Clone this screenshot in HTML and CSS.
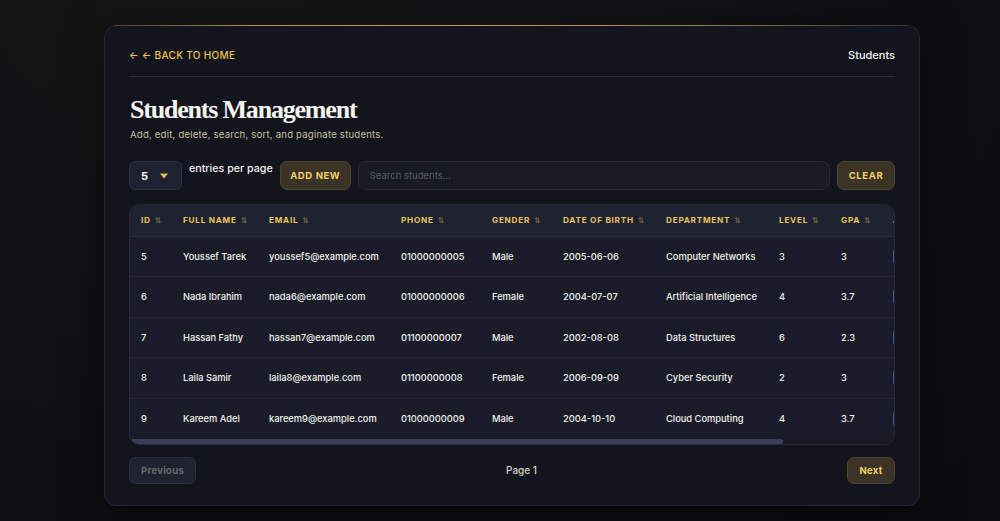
FILE: index.html
```html
<!DOCTYPE html>
<html lang="en">
<head>
<meta charset="utf-8">
<title>Students Management</title>
<link rel="stylesheet" href="styles.css">
</head>
<body>
<div class="card">
  <header class="topbar">
    <a class="back" href="#">← ← BACK TO HOME</a>
    <span class="crumb">Students</span>
  </header>
  <h1 class="title">Students Management</h1>
  <p class="subtitle">Add, edit, delete, search, sort, and paginate students.</p>

  <div class="controls">
    <div class="select">
      <span class="select-val">5</span>
      <svg class="caret" width="8" height="6" viewBox="0 0 8 6"><path d="M0 0.5 H8 L4 5.5 Z" fill="#e9c04a"/><path d="M3.2 0.5 L4 1.6 L4.8 0.5 Z" fill="#1e2130"/></svg>
    </div>
    <span class="entries">entries per page</span>
    <button class="btn-gold add">ADD NEW</button>
    <input class="search" type="text" placeholder="Search students...">
    <button class="btn-gold clear">CLEAR</button>
  </div>

  <div class="table-wrap">
    <div class="table-view">
      <table class="grid">
        <colgroup>
          <col class="c-id"><col class="c-name"><col class="c-email"><col class="c-phone"><col class="c-gender"><col class="c-dob"><col class="c-dept"><col class="c-level"><col class="c-gpa"><col class="c-act">
        </colgroup>
        <thead>
          <tr>
            <th>ID <span class="sort">⇅</span></th>
            <th>FULL NAME <span class="sort">⇅</span></th>
            <th>EMAIL <span class="sort">⇅</span></th>
            <th>PHONE <span class="sort">⇅</span></th>
            <th>GENDER <span class="sort">⇅</span></th>
            <th>DATE OF BIRTH <span class="sort">⇅</span></th>
            <th>DEPARTMENT <span class="sort">⇅</span></th>
            <th>LEVEL <span class="sort">⇅</span></th>
            <th>GPA <span class="sort">⇅</span></th>
            <th>ACTIONS</th>
          </tr>
        </thead>
        <tbody>
          <tr><td>5</td><td>Youssef Tarek</td><td>youssef5@example.com</td><td>01000000005</td><td>Male</td><td>2005-06-06</td><td>Computer Networks</td><td>3</td><td>3</td><td><span class="act edit">Edit</span><span class="act del">Delete</span></td></tr>
          <tr><td>6</td><td>Nada Ibrahim</td><td>nada6@example.com</td><td>01000000006</td><td>Female</td><td>2004-07-07</td><td>Artificial Intelligence</td><td>4</td><td>3.7</td><td><span class="act edit">Edit</span><span class="act del">Delete</span></td></tr>
          <tr><td>7</td><td>Hassan Fathy</td><td>hassan7@example.com</td><td>01100000007</td><td>Male</td><td>2002-08-08</td><td>Data Structures</td><td>6</td><td>2.3</td><td><span class="act edit">Edit</span><span class="act del">Delete</span></td></tr>
          <tr><td>8</td><td>Laila Samir</td><td>laila8@example.com</td><td>01100000008</td><td>Female</td><td>2006-09-09</td><td>Cyber Security</td><td>2</td><td>3</td><td><span class="act edit">Edit</span><span class="act del">Delete</span></td></tr>
          <tr><td>9</td><td>Kareem Adel</td><td>kareem9@example.com</td><td>01000000009</td><td>Male</td><td>2004-10-10</td><td>Cloud Computing</td><td>4</td><td>3.7</td><td><span class="act edit">Edit</span><span class="act del">Delete</span></td></tr>
        </tbody>
      </table>
    </div>
    <div class="hscroll"><div class="hscroll-thumb"></div></div>
  </div>

  <div class="pager">
    <button class="btn-prev">Previous</button>
    <span class="page">Page 1</span>
    <button class="btn-gold next">Next</button>
  </div>
</div>
</body>
</html>
```

FILE: styles.css
```css
* { box-sizing: border-box; }
html, body { height: 100%; }
body {
  margin: 0;
  background: radial-gradient(ellipse at 20% 0%, #161616 0%, #0f1014 55%, #0b0c10 100%);
  font-family: Inter, "Noto Sans", "DejaVu Sans", sans-serif;
  color: #eceae4;
  overflow: hidden;
}
.card {
  position: relative;
  width: 816px;
  height: 481px;
  margin: 25px 0 0 104px;
  padding: 21px 24px 22px 24px;
  background: #13151e;
  border: 1px solid #22252f;
  border-radius: 12px;
  box-shadow: 0 10px 40px rgba(0,0,0,0.55);
}
.card::before {
  content: "";
  position: absolute;
  top: -1px; left: 10px; right: 10px;
  height: 1px;
  background: linear-gradient(90deg, rgba(168,138,58,0.3) 0%, #b08a34 15%, #c9a040 45%, #9a7a36 75%, rgba(120,100,60,0.2) 100%);
}
.topbar {
  display: flex;
  justify-content: space-between;
  align-items: center;
  line-height: 16px;
  padding-bottom: 13px;
  border-bottom: 1px solid #2a2d39;
}
.back {
  color: #f0c33f;
  font-size: 10px;
  font-weight: 500;
  letter-spacing: 0.3px;
  text-decoration: none;
}
.crumb {
  font-size: 11px;
  color: #f4f2ee;
  font-weight: 500;
}
.title {
  margin: 17px 0 0 1px;
  font-family: "Liberation Serif", "DejaVu Serif", serif;
  font-weight: 700;
  font-size: 26px;
  line-height: 32px;
  letter-spacing: -1.2px;
  color: #f6f4ef;
}
.subtitle {
  margin: 2px 0 0 1px;
  font-size: 9.6px;
  line-height: 14px;
  color: #c9bf9e;
  letter-spacing: 0.2px;
}
.controls {
  display: flex;
  align-items: flex-start;
  gap: 7px;
  margin-top: 19px;
  height: 29px;
}
.select {
  width: 53px;
  height: 29px;
  display: flex;
  align-items: center;
  justify-content: space-between;
  padding: 0 13px 0 11px;
  background: #1e2130;
  border: 1px solid #2b2f40;
  border-radius: 6px;
}
.select-val { font-size: 11px; font-weight: 700; color: #fff; }
.caret { display: block; }
.entries {
  font-size: 10.7px;
  color: #f2f0ec;
  font-weight: 500;
  line-height: 14px;
  margin-top: 1px;
  white-space: nowrap;
}
.btn-gold {
  height: 29px;
  border: 1px solid #4f4530;
  background: #3a3326;
  color: #f4d062;
  font-family: inherit;
  font-size: 9.5px;
  font-weight: 700;
  letter-spacing: 0.6px;
  border-radius: 7px;
  padding: 0;
}
.add { width: 71px; }
.clear { width: 58px; }
.search {
  flex: 1;
  height: 29px;
  background: #181b26;
  border: 1px solid #262a37;
  border-radius: 8px;
  padding: 0 11px;
  font-family: inherit;
  font-size: 9.5px;
  color: #ddd;
  outline: none;
}
.search::placeholder { color: #555a68; }
.table-wrap {
  margin-top: 14px;
  overflow: hidden;
  border: 1px solid #252836;
  border-radius: 10px;
  background: #1a1d29;
}
.table-view { overflow: hidden; }
.hscroll {
  height: 5px;
  background: #181b25;
}
.hscroll-thumb {
  width: 653px;
  height: 5px;
  background: #3a3f5a;
  border-radius: 3px;
}
.grid {
  border-collapse: collapse;
  table-layout: fixed;
  width: 898px;
}
.c-id { width: 42px; }
.c-name { width: 86px; }
.c-email { width: 132px; }
.c-phone { width: 91px; }
.c-gender { width: 71px; }
.c-dob { width: 103px; }
.c-dept { width: 113px; }
.c-level { width: 62px; }
.c-gpa { width: 52px; }
.c-act { width: 146px; }
th, td {
  text-align: left;
  padding: 0 0 0 11px;
  white-space: nowrap;
  overflow: hidden;
}
th {
  height: 31px;
  background: #1f2231;
  color: #e9c25a;
  font-size: 8.2px;
  font-weight: 700;
  letter-spacing: 0.75px;
  border-bottom: 1px solid #2a2e3e;
}
.sort {
  font-family: "DejaVu Sans", sans-serif;
  color: #6f6447;
  font-size: 8px;
  letter-spacing: 0;
  margin-left: 1px;
}
td {
  height: 40.5px;
  font-size: 9.3px;
  color: #f1efea;
  font-weight: 500;
  border-bottom: 1px solid #222533;
}
tbody tr:last-child td { border-bottom: none; }
.act {
  display: inline-block;
  font-size: 9px;
  padding: 3px 10px;
  border-radius: 5px;
  margin-right: 6px;
}
.edit { border: 1px solid #3d5290; background: #1e2438; color: #9fb3ff; }
.del { border: 1px solid #6b3232; background: #2c1c20; color: #ff9a9a; }
.pager {
  display: flex;
  align-items: center;
  justify-content: space-between;
  margin-top: 12px;
}
.btn-prev {
  width: 67px;
  height: 27px;
  background: #1f2231;
  border: 1px solid #2b2f40;
  border-radius: 7px;
  color: #6c6a62;
  font-family: inherit;
  font-size: 9.5px;
  font-weight: 700;
  letter-spacing: 0.3px;
  padding: 0;
}
.page {
  font-size: 10px;
  font-weight: 500;
  color: #d9d1bd;
}
.next {
  width: 48px;
  height: 27px;
  font-size: 9.5px;
  letter-spacing: 0.3px;
}
```
